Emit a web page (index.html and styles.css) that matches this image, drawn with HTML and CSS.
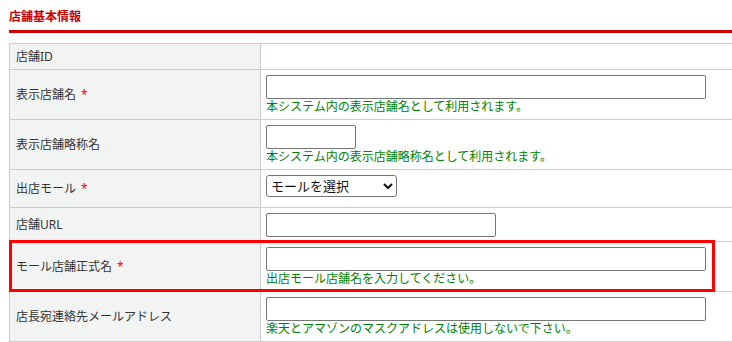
FILE: index.html
```html
<!DOCTYPE html>
<html lang="ja">
<head>
<meta charset="utf-8">
<title>店舗基本情報</title>
<link rel="stylesheet" href="styles.css">
</head>
<body>
<div class="page">
  <h2 class="section-title">店舗基本情報</h2>
  <div class="table-wrap">
    <table class="form-table">
      <colgroup><col class="col-label"><col></colgroup>
      <tr class="row-short">
        <th>店舗ID</th>
        <td></td>
      </tr>
      <tr>
        <th>表示店舗名<span class="req">*</span></th>
        <td>
          <input type="text" class="input input-wide">
          <p class="hint">本システム内の表示店舗名として利用されます。</p>
        </td>
      </tr>
      <tr>
        <th>表示店舗略称名</th>
        <td>
          <input type="text" class="input input-short">
          <p class="hint">本システム内の表示店舗略称名として利用されます。</p>
        </td>
      </tr>
      <tr>
        <th>出店モール<span class="req">*</span></th>
        <td>
          <select class="select">
            <option>モールを選択</option>
          </select>
        </td>
      </tr>
      <tr>
        <th>店舗URL</th>
        <td>
          <input type="text" class="input input-mid">
        </td>
      </tr>
      <tr>
        <th>モール店舗正式名<span class="req">*</span></th>
        <td>
          <input type="text" class="input input-wide">
          <p class="hint">出店モール店舗名を入力してください。</p>
        </td>
      </tr>
      <tr>
        <th>店長宛連絡先メールアドレス</th>
        <td>
          <input type="text" class="input input-wide">
          <p class="hint">楽天とアマゾンのマスクアドレスは使用しないで下さい。</p>
        </td>
      </tr>
    </table>
    <div class="highlight"></div>
  </div>
</div>
</body>
</html>
```
FILE: styles.css
```css
html, body {
  margin: 0;
  padding: 0;
  overflow: hidden;
  background: #ffffff;
}

body {
  font-family: "Noto Sans", "Noto Sans CJK JP", sans-serif;
  color: #333333;
  font-size: 12px;
}

.page {
  padding: 8px 0 0 9px;
}

.section-title {
  margin: 0;
  font-size: 12px;
  font-weight: bold;
  line-height: 18px;
  color: #cc0000;
  padding-bottom: 4px;
  border-bottom: 3px solid #cc0000;
}

.table-wrap {
  position: relative;
  margin-top: 10px;
}

.form-table {
  border-collapse: collapse;
  table-layout: fixed;
  width: 724px;
  line-height: 16px;
}

.col-label {
  width: 251px;
}

.form-table th,
.form-table td {
  border: 1px solid #cccccc;
}

.form-table th {
  background: #f2f3f3;
  text-align: left;
  font-weight: normal;
  vertical-align: middle;
  padding: 5px 6px 4px;
  color: #333333;
  white-space: nowrap;
}

.form-table td {
  background: #ffffff;
  vertical-align: top;
  padding: 5px 5px 4px;
}

.req {
  color: #ff0000;
  margin-left: 5px;
}

.input {
  display: block;
  height: 24px;
  box-sizing: border-box;
  border: 1px solid #767676;
  border-radius: 2px;
  margin: 0;
  padding: 1px 4px;
  font-size: 13px;
  background: #ffffff;
}

.input-wide { width: 440px; }
.input-short { width: 90px; }
.input-mid { width: 230px; }

.hint {
  margin: 0;
  color: #008000;
  font-size: 12px;
  line-height: 16px;
}

.select {
  display: block;
  width: 131px;
  height: 22px;
  margin: 0 0 6px;
  font-family: "Noto Sans", "Noto Sans CJK JP", sans-serif;
  font-size: 13px;
  color: #111111;
  border: 1px solid #767676;
  border-radius: 3px;
  background: #ffffff;
}

.highlight {
  position: absolute;
  left: 0;
  top: 197px;
  width: 706px;
  height: 52px;
  box-sizing: border-box;
  border: 3px solid #ff0000;
  pointer-events: none;
}
```
